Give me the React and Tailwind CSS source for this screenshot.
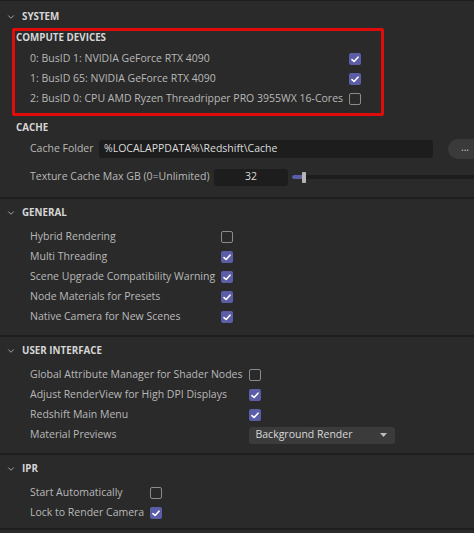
import { ChevronDown } from "lucide-react";

const font = { fontFamily: '"Open Sans", "Noto Sans", sans-serif' };

function Check({ on }) {
  if (!on) {
    return (
      <span className="block w-[12px] h-[12px] rounded-[2px] border-[1.5px] border-[#8c8c8c]" />
    );
  }
  return (
    <span className="flex items-center justify-center w-[12px] h-[12px] rounded-[2px] bg-[#5b5da6]">
      <svg width="8" height="7" viewBox="0 0 8 7" fill="none">
        <path d="M1 3.6 L3.1 5.5 L7 1.2" stroke="#ffffff" strokeWidth="1.6" strokeLinecap="round" strokeLinejoin="round" />
      </svg>
    </span>
  );
}

function Header({ title }) {
  return (
    <div className="flex items-center h-[20px] pl-[6px] gap-[6px]">
      <ChevronDown size={10} strokeWidth={2} className="text-[#bdbdbd]" />
      <span className="text-[9.8px] font-bold text-[#d6d6d6]">{title}</span>
    </div>
  );
}

function SubHeader({ title, className = "h-[20px] items-center" }) {
  return (
    <div className={`flex pl-[16px] text-[9.8px] font-bold text-[#d6d6d6] ${className}`}>
      {title}
    </div>
  );
}

function CheckRows({ rows }) {
  return (
    <div className="grid grid-cols-[auto_1fr] gap-x-[6px] pl-[30px]">
      {rows.map(([label, on]) => (
        <div key={label} className="contents">
          <div className="h-[20px] flex items-center text-[10.5px] text-[#b9b9b9] whitespace-nowrap">{label}</div>
          <div className="h-[20px] flex items-center">
            <Check on={on} />
          </div>
        </div>
      ))}
    </div>
  );
}

function Divider() {
  return <div className="h-[2px] bg-[#1e1e1e]" />;
}

export default function App() {
  return (
    <div style={font} className="w-[474px] h-[533px] overflow-hidden bg-[#2a2a2a] border-t border-[#1e1e1e]">
      {/* System */}
      <div className="pt-[6px] pb-[10px]">
        <Header title="SYSTEM" />
        <div className="mt-[1px] ml-[12px] w-[372px] border-[3px] border-[#e00b0b] rounded-[2px] pb-[4px]">
          <div className="-ml-[15px]">
            <SubHeader title="COMPUTE DEVICES" className="h-[18px] items-start" />
            <CheckRows
              rows={[
                ["0: BusID 1: NVIDIA GeForce RTX 4090", true],
                ["1: BusID 65: NVIDIA GeForce RTX 4090", true],
                ["2: BusID 0: CPU AMD Ryzen Threadripper PRO 3955WX 16-Cores", false],
              ]}
            />
          </div>
        </div>

        <div className="mt-[2px]">
          <SubHeader title="CACHE" />
          <div className="flex items-center h-[22px] pl-[30px]">
            <span className="text-[10.5px] text-[#b9b9b9] w-[69px] shrink-0">Cache Folder</span>
            <div className="w-[334px] shrink-0 h-[18px] rounded-[3px] bg-[#1d1d1d] flex items-center pl-[5px] text-[10.5px] text-[#dcdcdc]">
              %LOCALAPPDATA%\Redshift\Cache
            </div>
            <div className="ml-[15px] w-[34px] shrink-0 h-[20px] rounded-full bg-[#3a3a3a] flex items-center justify-center text-[10px] text-[#d0d0d0] pb-[3px]">
              ...
            </div>
          </div>
          <div className="flex items-center h-[20px] pl-[30px] mt-[7px]">
            <span className="text-[10.5px] text-[#b9b9b9] w-[184px] shrink-0 whitespace-nowrap">Texture Cache Max GB (0=Unlimited)</span>
            <div className="w-[74px] shrink-0 h-[17px] rounded-[3px] bg-[#1d1d1d] flex items-center justify-center text-[10.5px] text-[#dcdcdc]">
              32
            </div>
            <div className="flex-1 ml-[4px] relative h-[12px] flex items-center">
              <div className="w-full h-[4px] bg-[#1d1d1d] rounded-l-[2px]" />
              <div className="absolute left-[0px] w-[12px] h-[4px] bg-[#5b5da6] rounded-l-[2px]" />
              <div className="absolute left-[10px] w-[4px] h-[11px] bg-[#b5b5b5] rounded-[1px]" />
            </div>
          </div>
        </div>
      </div>
      <Divider />

      {/* General */}
      <div className="pt-[4px] pb-[8px]">
        <Header title="GENERAL" />
        <div className="mt-[4px]">
          <CheckRows
            rows={[
              ["Hybrid Rendering", false],
              ["Multi Threading", true],
              ["Scene Upgrade Compatibility Warning", true],
              ["Node Materials for Presets", true],
              ["Native Camera for New Scenes", true],
            ]}
          />
        </div>
      </div>
      <Divider />

      {/* User interface */}
      <div className="pt-[4px] pb-[8px]">
        <Header title="USER INTERFACE" />
        <div className="mt-[4px] grid grid-cols-[auto_1fr] gap-x-[6px] pl-[30px]">
          {[
            ["Global Attribute Manager for Shader Nodes", false],
            ["Adjust RenderView for High DPI Displays", true],
            ["Redshift Main Menu", true],
          ].map(([label, on]) => (
            <div key={label} className="contents">
              <div className="h-[20px] flex items-center text-[10.5px] text-[#b9b9b9] whitespace-nowrap">{label}</div>
              <div className="h-[20px] flex items-center">
                <Check on={on} />
              </div>
            </div>
          ))}
          <div className="h-[20px] flex items-center text-[10.5px] text-[#b9b9b9]">Material Previews</div>
          <div className="h-[20px] flex items-center">
            <div className="w-[146px] h-[17px] rounded-[3px] bg-[#3b3b3b] flex items-center justify-between pl-[7px] pr-[8px] text-[10.5px] text-[#d8d8d8]">
              <span>Background Render</span>
              <svg width="7" height="4" viewBox="0 0 7 4">
                <path d="M0 0 H7 L3.5 4 Z" fill="#bdbdbd" />
              </svg>
            </div>
          </div>
        </div>
      </div>
      <Divider />

      {/* IPR */}
      <div className="pt-[4px] pb-[5px]">
        <Header title="IPR" />
        <div className="mt-[4px]">
          <CheckRows
            rows={[
              ["Start Automatically", false],
              ["Lock to Render Camera", true],
            ]}
          />
        </div>
      </div>
      <Divider />
    </div>
  );
}
